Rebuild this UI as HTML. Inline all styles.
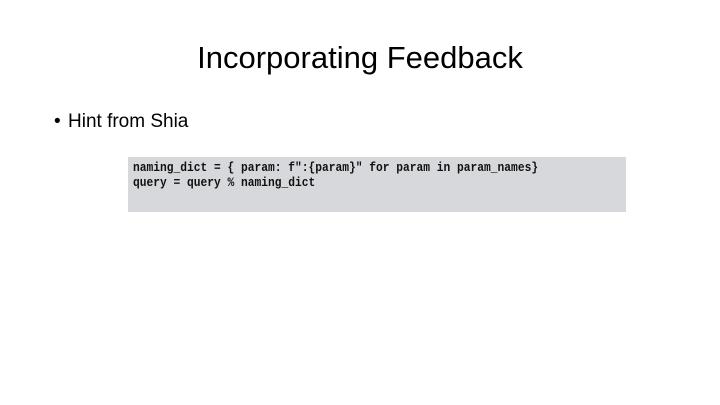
<!DOCTYPE html>
<html><head><meta charset="utf-8"><style>
html,body{margin:0;padding:0;background:#fff;}
body{width:720px;height:405px;position:relative;overflow:hidden;font-family:"Liberation Sans",sans-serif;color:#000;}
.t{position:absolute;top:40px;left:0;width:720px;text-align:center;font-size:31px;}
.b{position:absolute;top:111px;left:54px;font-size:19px;}
.b span{display:inline-block;width:14px;}
.code{position:absolute;left:128px;top:157px;width:498px;height:55px;background:#d6d8db;}
.code pre{margin:0;position:absolute;left:5px;top:4px;font-family:"Liberation Mono",monospace;font-weight:bold;font-size:12.5px;line-height:15px;color:#111;transform:scaleX(0.9);transform-origin:0 0;}
</style></head><body>
<div class="t">Incorporating Feedback</div>
<div class="b"><span>•</span>Hint from Shia</div>
<div class="code"><pre>naming_dict = { param: f":{param}" for param in param_names}
query = query % naming_dict</pre></div>
</body></html>
